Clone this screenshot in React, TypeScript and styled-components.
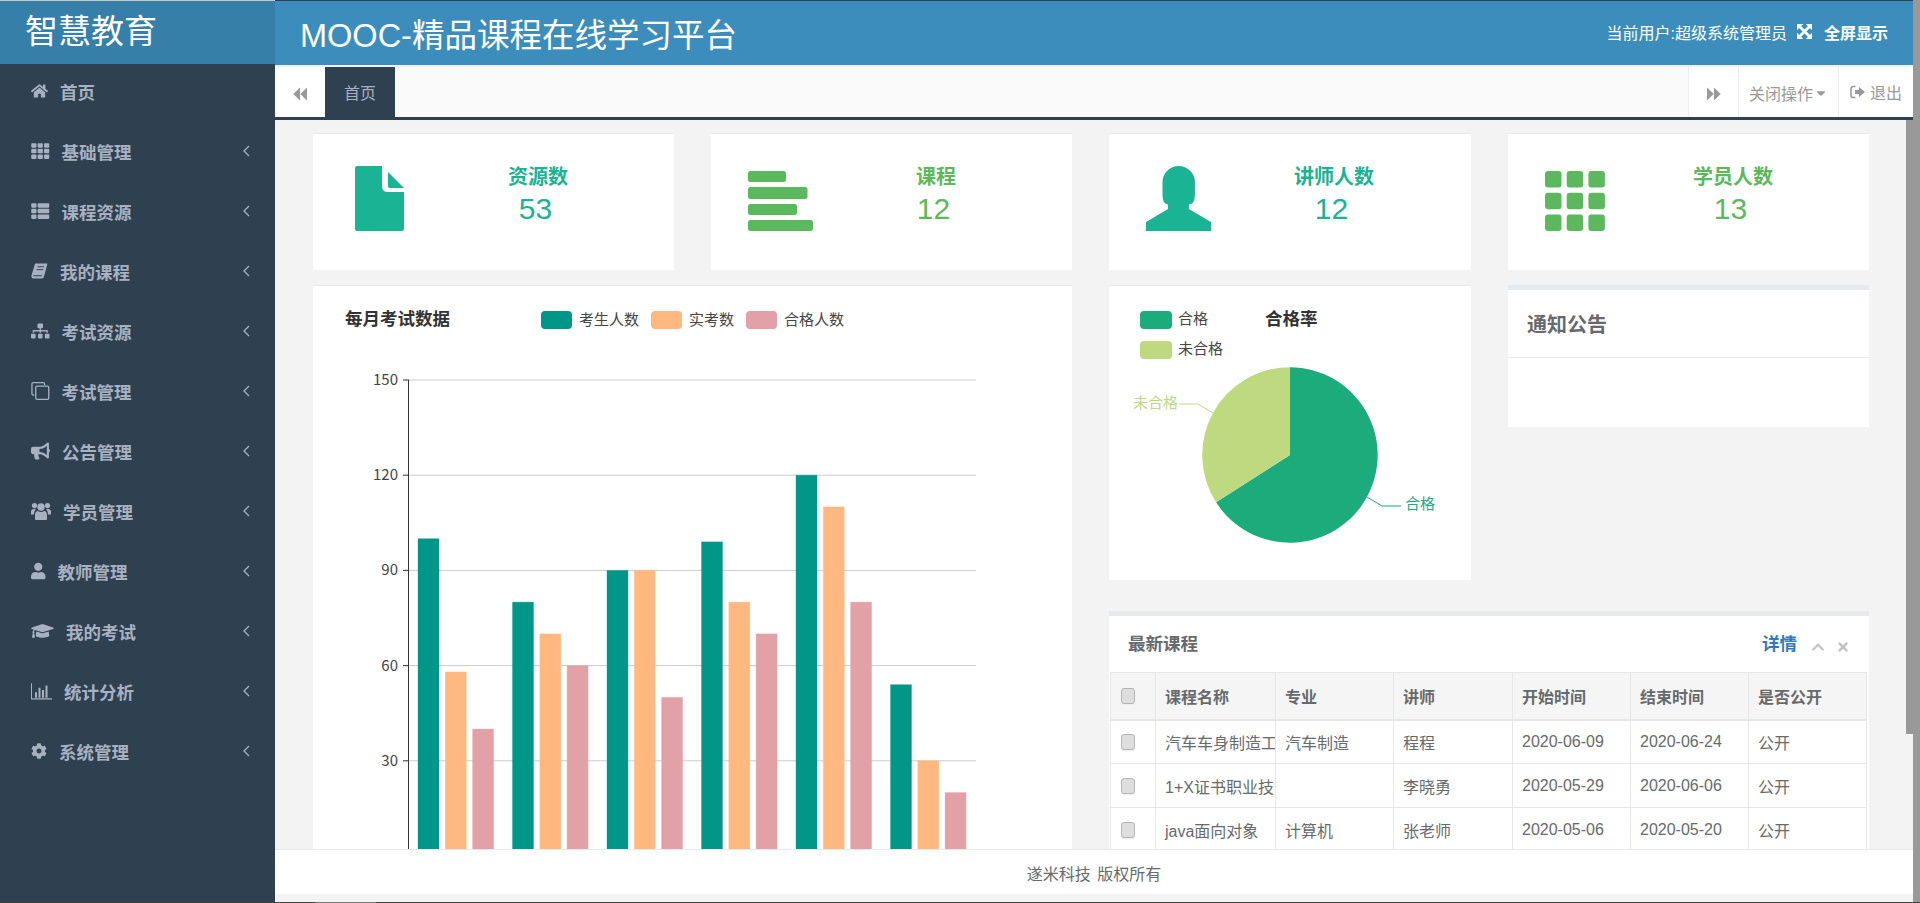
import { ReactNode } from 'react';
import styled, { createGlobalStyle } from 'styled-components';
import {
  FaBullhorn,
  FaCaretDown,
  FaChevronUp,
  FaCog,
  FaGraduationCap,
  FaHome,
  FaSitemap,
  FaTh,
  FaThList,
  FaTimes,
  FaUser,
} from 'react-icons/fa';

const GlobalStyle = createGlobalStyle`
  html, body {
    margin: 0;
    padding: 0;
    height: 903px;
    overflow: hidden;
    background: #f3f3f4;
    font-family: "Liberation Sans", "Noto Sans CJK SC", sans-serif;
    color: #676a6c;
  }
`;

const Page = styled.div`
  width: 1920px;
  height: 903px;
  display: flex;
  flex-direction: column;
`;

const Body = styled.div`
  flex: 1;
  min-height: 0;
  display: flex;
`;

const BottomEdge = styled.div`
  height: 1px;
  background: linear-gradient(to right, #444 315px, #777 315px, #777 376px, #444 376px);
`;

const Sidebar = styled.aside`
  width: 275px;
  flex-shrink: 0;
  background: #2f4050;
  display: flex;
  flex-direction: column;
`;

const Logo = styled.div`
  height: 55px;
  padding: 0 0 8px 25px;
  border-top: 1px solid #c9c9c9;
  background: #367fa9;
  color: #fff;
  font-size: 33px;
  display: flex;
  align-items: center;
`;

const Nav = styled.nav`
  display: flex;
  flex-direction: column;
  margin-top: -3px;
`;

const NavItem = styled.a`
  height: 60px;
  padding: 0 25px 0 31px;
  display: flex;
  align-items: center;
  gap: 12px;
  color: #a7b1c2;
  font-size: 17.5px;
  font-weight: 700;
`;

const NavIcon = styled.span<{ $w: number }>`
  width: ${(p) => p.$w}px;
  display: flex;
  justify-content: center;

  svg {
    width: ${(p) => p.$w}px;
    height: 18px;
  }
`;

const NavArrow = styled.svg`
  margin-left: auto;
  width: 7px;
  height: 12px;
  fill: none;
  stroke: currentColor;
  stroke-width: 1.3;
`;

const Work = styled.div`
  flex: 1;
  min-width: 0;
  display: flex;
  flex-direction: column;
`;

const OuterScroll = styled.div`
  width: 7px;
  flex-shrink: 0;
  background: #999;
`;

const Header = styled.header`
  height: 64px;
  flex-shrink: 0;
  border-top: 1px solid #2f4050;
  background: #3c8dbc;
  padding: 0 25px;
  display: flex;
  align-items: center;
  justify-content: space-between;
  color: #fff;
`;

const AppTitle = styled.h1`
  margin: 0 0 2px;
  font-size: 32.5px;
  font-weight: 400;
`;

const UserBox = styled.div`
  display: flex;
  align-items: center;
  font-size: 16px;
  margin-bottom: 3px;
`;

const FullScreen = styled.span`
  display: flex;
  align-items: center;
  gap: 12px;
  margin-left: 10px;
  font-weight: 700;
`;

const TabBar = styled.div`
  height: 50px;
  flex-shrink: 0;
  border-top: 2px solid #f0f0f0;
  border-bottom: 3px solid #2f4050;
  background: #fafafa;
  display: flex;
`;

const BarButton = styled.div<{ $w: number; $edge?: boolean; $drop?: number }>`
  width: ${(p) => p.$w}px;
  box-sizing: border-box;
  padding-top: ${(p) => p.$drop ?? 0}px;
  display: flex;
  align-items: center;
  justify-content: center;
  gap: 4px;
  background: #fff;
  color: #999;
  font-size: 16px;
  border-left: ${(p) => (p.$edge ? '1px solid #eee' : 'none')};

  svg {
    flex-shrink: 0;
  }
`;

const Caret = styled(FaCaretDown)`
  width: 14px;
  height: 14px;
  margin-left: -3px;
`;

const ActiveTab = styled.div`
  width: 70px;
  display: flex;
  align-items: center;
  justify-content: center;
  background: #2f4050;
  color: #a7b1c2;
  font-size: 16px;
`;

const TabSpacer = styled.div`
  flex: 1;
`;

const ContentRow = styled.div`
  flex: 1;
  min-height: 0;
  display: flex;
`;

const InnerScroll = styled.div`
  width: 7px;
  flex-shrink: 0;
`;

const InnerThumb = styled.div`
  height: 614px;
  background: #999;
`;

const Main = styled.main`
  flex: 1;
  min-width: 0;
  overflow: hidden;
  padding: 13px 0 0 38px;
  display: grid;
  grid-template-columns: 361px 361px 362px 361px;
  grid-template-rows: 137px 295px auto;
  column-gap: 37px;
  row-gap: 15px;
  align-content: start;
`;

const Card = styled.section`
  background: #fff;
  border-top: 1px solid #e7eaec;
  box-sizing: border-box;
`;

const StatCard = styled(Card)`
  display: flex;
`;

const StatIcon = styled.div<{ $inset: number }>`
  width: 150px;
  height: 97px;
  box-sizing: border-box;
  padding-left: ${(p) => p.$inset}px;
  display: flex;
  align-items: flex-end;
`;

const StatBody = styled.div<{ $color: string }>`
  width: 150px;
  padding-top: 29px;
  text-align: center;
  color: ${(p) => p.$color};
`;

const StatTitle = styled.div`
  font-size: 20px;
  line-height: 28px;
  font-weight: 700;
`;

const StatValue = styled.div`
  font-size: 30px;
  line-height: 36px;
  padding-right: 5px;
`;

const ChartCard = styled(Card)`
  grid-column: 1 / span 2;
  grid-row: 2 / span 2;
  height: 640px;
`;

const PieCard = styled(Card)`
  grid-column: 3;
  grid-row: 2;
`;

const ChartSvg = styled.svg`
  display: block;
  font-family: "Noto Sans CJK SC", sans-serif;
  font-size: 15px;
`;

const NoticeCard = styled.section`
  grid-column: 4;
  grid-row: 2;
  align-self: start;
  height: 142px;
  box-sizing: border-box;
  background: #fff;
  border-top: 5px solid #e7eaec;
`;

const NoticeTitle = styled.h3`
  margin: 0;
  height: 67px;
  padding-left: 19px;
  display: flex;
  align-items: center;
  border-bottom: 1px solid #e7eaec;
  font-size: 20px;
  font-weight: 700;
  color: #676a6c;
`;

const CoursePanel = styled.section`
  grid-column: 3 / span 2;
  grid-row: 3;
  margin-top: 16px;
  background: #fff;
  border-top: 5px solid #e7eaec;
`;

const PanelHead = styled.div`
  height: 52px;
  padding: 0 19px 4px;
  display: flex;
  align-items: center;
  font-size: 17.5px;
  font-weight: 700;
`;

const PanelLink = styled.a`
  margin-left: auto;
  margin-right: 3px;
  color: #337ab7;
`;

const PanelTool = styled.span`
  display: flex;
  margin-left: 11px;
  color: #c4c4c4;
  padding-top: 9px;

  svg {
    width: 14px;
    height: 14px;
  }
`;

const CourseTable = styled.table`
  width: 756px;
  margin-left: 1px;
  table-layout: fixed;
  border-collapse: collapse;
  border: 1px solid #e7e7e7;
  font-size: 16px;
`;

const HeadCell = styled.th`
  height: 47px;
  padding: 0 9px;
  box-sizing: border-box;
  text-align: left;
  background: #f5f5f6;
  border: 1px solid #e7e7e7;
  border-bottom-width: 2px;
  font-weight: 700;
  white-space: nowrap;
`;

const BodyCell = styled.td`
  height: 44px;
  padding: 0 9px;
  box-sizing: border-box;
  border: 1px solid #e7e7e7;
  white-space: nowrap;
  overflow: hidden;
`;

const Check = styled.input.attrs({ type: 'checkbox' })`
  appearance: none;
  display: block;
  width: 14px;
  height: 16px;
  margin: 0 0 0 1px;
  box-sizing: border-box;
  border: 1px solid #b5b5b5;
  border-radius: 3px;
  background: #dedede;
  box-shadow: 0 1px 1px #eee;
`;

const Footer = styled.footer`
  height: 43px;
  padding-top: 1px;
  flex-shrink: 0;
  margin-bottom: 8px;
  background: #fff;
  border-top: 1px solid #e7eaec;
  display: flex;
  align-items: center;
  justify-content: center;
  font-size: 16px;
  word-spacing: 2px;
`;

const BookIcon = () => (
  <svg viewBox="0 0 18 18">
    <path
      fill="currentColor"
      d="M5 1h12.500l-3.600 13.200c-.5 1.700-1.200 2.800-3.100 2.800H2.500C.9 17 .1 15.400.6 13.600L4 2c.1-.6.5-1 1-1z"
    />
    <path stroke="#2f4050" strokeWidth="1" d="M6.800 4.500h7M6 7.500h7M2.600 14h9.200" />
  </svg>
);

const CloneIcon = () => (
  <svg viewBox="0 0 18 18" fill="none" stroke="currentColor" strokeWidth="1.300">
    <path d="M3 13H2a1.300 1.300 0 0 1-1.300-1.300V2A1.300 1.300 0 0 1 2 .7h10A1.300 1.300 0 0 1 13.300 2v1" />
    <rect x="4.500" y="4.200" width="13" height="13.100" rx="1.300" />
  </svg>
);

const BarsIcon = () => (
  <svg viewBox="0 0 21 16" preserveAspectRatio="none">
    <path stroke="currentColor" strokeWidth="1" fill="none" d="M.5 1v14H21" />
    <path fill="currentColor" d="M4 9h2v5H4zM7.500 5h2v9h-2zM11 7h2v7h-2zM14.500 3h2v11h-2z" />
  </svg>
);

const UsersIcon = () => (
  <svg viewBox="0 0 20 18" fill="currentColor">
    <circle cx="3.500" cy="3.600" r="2.600" />
    <circle cx="16.500" cy="3.600" r="2.600" />
    <circle cx="10" cy="5" r="3.700" />
    <path d="M0 12.500V9.500c0-1.500 1-2.500 3-2.500.7 0 1.300.1 1.800.4C3.600 8.500 3 10 3 12.500zM20 12.500V9.500c0-1.500-1-2.500-3-2.500-.7 0-1.300.1-1.800.4 1.200 1.100 1.800 2.600 1.800 5.100z" />
    <path d="M4 17v-4c0-2.800 1.500-3.800 3-4 .8.700 1.800 1 3 1s2.200-.3 3-1c1.500.2 3 1.200 3 4v4c0 .6-.5 1-1 1H5c-.5 0-1-.4-1-1z" />
  </svg>
);

const ArrowsAltGlyph = () => (
  <svg width="15" height="15" viewBox="0 0 15 15" fill="#fff">
    <path d="M0 0h6.200L0 6.200zM15 0v6.200L8.800 0zM0 15V8.800L6.200 15zM15 15H8.800L15 8.800z" />
    <path stroke="#fff" strokeWidth="2.800" d="M2.500 2.500l10 10M12.500 2.500l-10 10" />
  </svg>
);

const BackGlyph = () => (
  <svg width="14" height="14" viewBox="0 0 14 14" fill="currentColor">
    <path d="M7 0.500v13L.3 7zM14 .5v13L7.300 7z" />
  </svg>
);

const ForwardGlyph = () => (
  <svg width="14" height="14" viewBox="0 0 14 14" fill="currentColor">
    <path d="M0 .5v13L6.700 7zM7 .5v13L13.700 7z" />
  </svg>
);

const SignOutGlyph = () => (
  <svg width="16" height="14" viewBox="0 0 16 14">
    <path
      fill="none"
      stroke="#999"
      strokeWidth="1.600"
      d="M5.500 1.500H3A2 2 0 0 0 1 3.500v7a2 2 0 0 0 2 2h2.500"
    />
    <path fill="#999" d="M5 5h4V2l6 5-6 5V9H5z" />
  </svg>
);

const navItems: { label: string; icon: ReactNode; w: number; arrow?: boolean }[] = [
  { label: '首页', icon: <FaHome />, w: 17 },
  { label: '基础管理', icon: <FaTh />, w: 18.5, arrow: true },
  { label: '课程资源', icon: <FaThList />, w: 18.5, arrow: true },
  { label: '我的课程', icon: <BookIcon />, w: 17, arrow: true },
  { label: '考试资源', icon: <FaSitemap />, w: 18.5, arrow: true },
  { label: '考试管理', icon: <CloneIcon />, w: 18.5, arrow: true },
  { label: '公告管理', icon: <FaBullhorn />, w: 19, arrow: true },
  { label: '学员管理', icon: <UsersIcon />, w: 20, arrow: true },
  { label: '教师管理', icon: <FaUser />, w: 14.5, arrow: true },
  { label: '我的考试', icon: <FaGraduationCap />, w: 23, arrow: true },
  { label: '统计分析', icon: <BarsIcon />, w: 21, arrow: true },
  { label: '系统管理', icon: <FaCog />, w: 16, arrow: true },
];

const FileGlyph = () => (
  <svg width="49" height="65" viewBox="0 0 49 65" fill="#1ab394">
    <path d="M2 0h25v20q0 6 6 6h16v37q0 2-2 2H2q-2 0-2-2V2q0-2 2-2z" />
    <path d="M33 6l16 16H35q-2 0-2-2z" />
  </svg>
);

const ListGlyph = () => (
  <svg width="65" height="60" viewBox="0 0 65 60" fill="#5cb85c">
    <rect x="0" y="0" width="38" height="11" rx="2.500" />
    <rect x="0" y="16" width="59.500" height="12" rx="2.500" />
    <rect x="0" y="33" width="49" height="11" rx="2.500" />
    <rect x="0" y="49" width="65" height="11" rx="2.500" />
  </svg>
);

const PersonGlyph = () => (
  <svg width="65" height="65" viewBox="0 0 65 65" fill="#1ab394">
    <path d="M16.500 16a16.200 16 0 0 1 32.400 0v13q0 9-6 9.500V43L65 56v9H0v-9l22-13v-4.500Q16.500 38 16.500 29z" />
  </svg>
);

const GridGlyph = () => (
  <svg width="60" height="60" viewBox="0 0 60 60" fill="#5cb85c">
    {[0, 21.7, 43.4].map((y) =>
      [0, 21.7, 43.4].map((x) => (
        <rect key={`${x}-${y}`} x={x} y={y} width="16.500" height="16.500" rx="3" />
      )),
    )}
  </svg>
);

const stats = [
  { title: '资源数', value: 53, color: '#1ab394', inset: 42, glyph: <FileGlyph /> },
  { title: '课程', value: 12, color: '#5cb85c', inset: 37, glyph: <ListGlyph /> },
  { title: '讲师人数', value: 12, color: '#1ab394', inset: 36.5, glyph: <PersonGlyph /> },
  { title: '学员人数', value: 13, color: '#5cb85c', inset: 37, glyph: <GridGlyph /> },
];

const series = [
  { name: '考生人数', color: '#009688', swatch: 541, text: 579, values: [100, 80, 90, 99, 120, 54] },
  { name: '实考数', color: '#ffb980', swatch: 651, text: 689, values: [58, 70, 90, 80, 110, 30] },
  { name: '合格人数', color: '#e2a1a7', swatch: 746, text: 784, values: [40, 60, 50, 70, 80, 20] },
];

const BASE_Y = 856;
const UNIT = 95.2 / 30;

const BarChart = () => (
  <ChartSvg width="758" height="620" viewBox="313 286 758 620">
    <text x="345" y="325" fontSize="17.500" fontWeight="700" fill="#333">
      每月考试数据
    </text>
    {series.map((s) => (
      <g key={s.name}>
        <rect x={s.swatch} y="311" width="31" height="18" rx="4" fill={s.color} />
        <text x={s.text} y="325" fill="#444">
          {s.name}
        </text>
      </g>
    ))}
    {[0, 30, 60, 90, 120, 150].map((v) => (
      <g key={v}>
        {v > 0 && <line x1="409" x2="976" y1={BASE_Y - v * UNIT} y2={BASE_Y - v * UNIT} stroke="#ccc" />}
        <line x1="403" x2="409" y1={BASE_Y - v * UNIT} y2={BASE_Y - v * UNIT} stroke="#333" />
        <text x="398" y={BASE_Y - v * UNIT + 5} textAnchor="end" fill="#444">
          {v}
        </text>
      </g>
    ))}
    <line x1="408.500" x2="408.500" y1="380" y2={BASE_Y} stroke="#333" />
    {series.map((s, i) =>
      s.values.map((v, g) => (
        <rect
          key={`${s.name}-${g}`}
          x={418 + g * 94.5 + i * 27.3}
          y={BASE_Y - v * UNIT}
          width="21"
          height={v * UNIT}
          fill={s.color}
          stroke={s.color}
          strokeOpacity="0.3"
        />
      )),
    )}
  </ChartSvg>
);

const PieChart = () => (
  <ChartSvg width="361" height="294" viewBox="1109 286 361 294">
    <rect x="1140" y="311" width="32" height="18" rx="4" fill="#1cab7b" />
    <text x="1178" y="324" fill="#444">合格</text>
    <rect x="1140" y="341" width="32" height="18" rx="4" fill="#bed97f" />
    <text x="1178" y="354" fill="#444">未合格</text>
    <text x="1265" y="325" fontSize="17.500" fontWeight="700" fill="#333">
      合格率
    </text>
    <path d="M1290 455V367.300A87.700 87.700 0 1 1 1216.100 502.300Z" fill="#1cab7b" />
    <path d="M1290 455L1216.100 502.300A87.700 87.700 0 0 1 1290 367.300Z" fill="#bed97f" />
    <path d="M1367 497L1382 506H1401" fill="none" stroke="#1cab7b" />
    <text x="1405" y="509" fill="#1cab7b">合格</text>
    <path d="M1213 413L1198 404H1179" fill="none" stroke="#bed97f" />
    <text x="1133" y="408" fill="#bed97f">未合格</text>
  </ChartSvg>
);

const columns = [
  { label: '课程名称', width: 120 },
  { label: '专业', width: 118 },
  { label: '讲师', width: 119 },
  { label: '开始时间', width: 118 },
  { label: '结束时间', width: 118 },
  { label: '是否公开', width: 118 },
];

const courses = [
  ['汽车车身制造工艺', '汽车制造', '程程', '2020-06-09', '2020-06-24', '公开'],
  ['1+X证书职业技能培训', '', '李晓勇', '2020-05-29', '2020-06-06', '公开'],
  ['java面向对象', '计算机', '张老师', '2020-05-06', '2020-05-20', '公开'],
];

const App = () => (
  <>
    <GlobalStyle />
    <Page>
      <Body>
        <Sidebar>
          <Logo>智慧教育</Logo>
          <Nav>
            {navItems.map((item) => (
              <NavItem key={item.label}>
                <NavIcon $w={item.w}>{item.icon}</NavIcon>
                {item.label}
                {item.arrow && (
                  <NavArrow viewBox="0 0 7 12">
                    <path d="M6 1L1 6l5 5" />
                  </NavArrow>
                )}
              </NavItem>
            ))}
          </Nav>
        </Sidebar>
        <Work>
          <Header>
            <AppTitle>MOOC-精品课程在线学习平台</AppTitle>
            <UserBox>
              当前用户:超级系统管理员
              <FullScreen>
                <ArrowsAltGlyph />
                全屏显示
              </FullScreen>
            </UserBox>
          </Header>
          <TabBar>
            <BarButton $w={50} $drop={3}>
              <BackGlyph />
            </BarButton>
            <ActiveTab>首页</ActiveTab>
            <TabSpacer />
            <BarButton $w={50} $edge $drop={3}>
              <ForwardGlyph />
            </BarButton>
            <BarButton $w={100} $edge $drop={2}>
              关闭操作
              <Caret />
            </BarButton>
            <BarButton $w={75} $edge>
              <SignOutGlyph />
              退出
            </BarButton>
          </TabBar>
          <ContentRow>
            <Main>
              {stats.map((s) => (
                <StatCard key={s.title}>
                  <StatIcon $inset={s.inset}>{s.glyph}</StatIcon>
                  <StatBody $color={s.color}>
                    <StatTitle>{s.title}</StatTitle>
                    <StatValue>{s.value}</StatValue>
                  </StatBody>
                </StatCard>
              ))}
              <ChartCard>
                <BarChart />
              </ChartCard>
              <PieCard>
                <PieChart />
              </PieCard>
              <NoticeCard>
                <NoticeTitle>通知公告</NoticeTitle>
              </NoticeCard>
              <CoursePanel>
                <PanelHead>
                  最新课程
                  <PanelLink>详情</PanelLink>
                  <PanelTool>
                    <FaChevronUp />
                  </PanelTool>
                  <PanelTool>
                    <FaTimes />
                  </PanelTool>
                </PanelHead>
                <CourseTable>
                  <colgroup>
                    <col width={45} />
                    {columns.map((c) => (
                      <col key={c.label} width={c.width} />
                    ))}
                  </colgroup>
                  <thead>
                    <tr>
                      <HeadCell>
                        <Check />
                      </HeadCell>
                      {columns.map((c) => (
                        <HeadCell key={c.label}>{c.label}</HeadCell>
                      ))}
                    </tr>
                  </thead>
                  <tbody>
                    {courses.map((row) => (
                      <tr key={row[0]}>
                        <BodyCell>
                          <Check />
                        </BodyCell>
                        {row.map((cell, i) => (
                          <BodyCell key={i}>{cell}</BodyCell>
                        ))}
                      </tr>
                    ))}
                  </tbody>
                </CourseTable>
              </CoursePanel>
            </Main>
            <InnerScroll>
              <InnerThumb />
            </InnerScroll>
          </ContentRow>
          <Footer>遂米科技 版权所有</Footer>
        </Work>
        <OuterScroll />
      </Body>
      <BottomEdge />
    </Page>
  </>
);

export default App;
